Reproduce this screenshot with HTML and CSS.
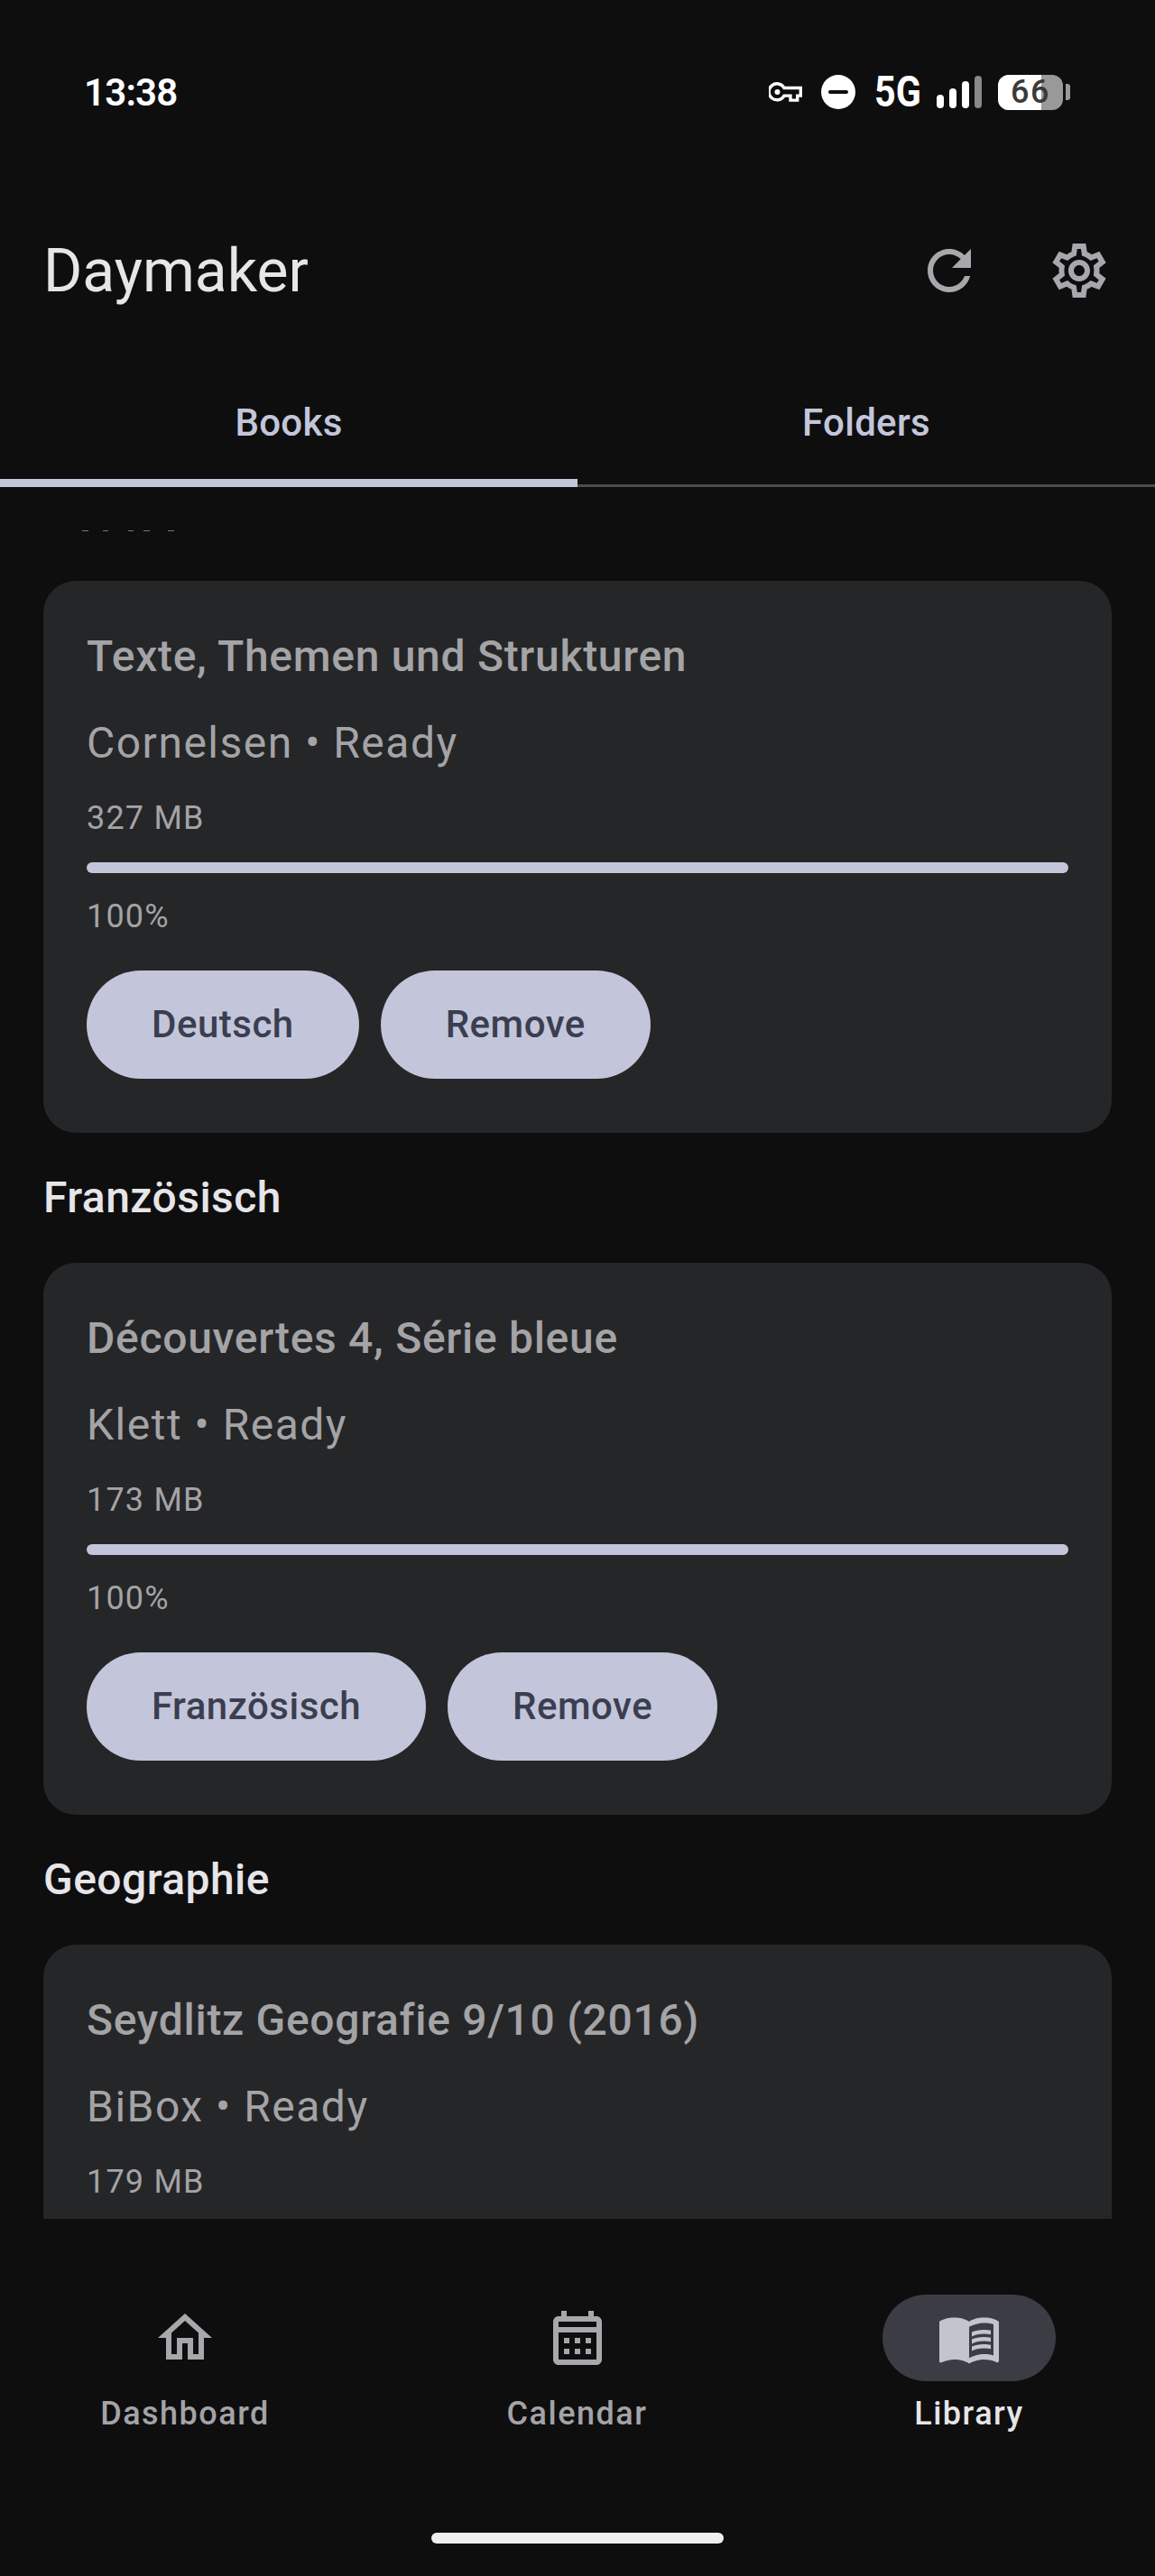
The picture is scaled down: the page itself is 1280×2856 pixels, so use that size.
FILE: index.html
```html
<!DOCTYPE html>
<html lang="en">
<head>
    <meta charset="UTF-8">
    <meta name="viewport" content="width=device-width, initial-scale=1.0">
    <title>Daymaker</title>
    <link rel="stylesheet" href="styles.css">
</head>
<body>
    <div class="status-bar">
        <div class="clock">13:38</div>
        <div class="status-icons">
            <svg class="key-icon" viewBox="0 0 37 22"><path fill="none" stroke="#fff" stroke-width="3.4" d="M17 6.5h18.3v8.6h-3.6v5H24v-5h-7a9 9 0 1 1 0-8.6z"/><circle cx="9.5" cy="11" r="3" fill="#fff"/></svg>
            <svg class="dnd-icon" viewBox="0 0 38 38"><path fill="#fff" fill-rule="evenodd" d="M19 0a19 19 0 1 1 0 38a19 19 0 1 1 0-38zM10 17a2 2 0 0 0 0 4h18a2 2 0 0 0 0-4z"/></svg>
            <span class="net">5G</span>
            <div class="signal">
                <span class="bar b1"></span>
                <span class="bar b2"></span>
                <span class="bar b3"></span>
                <span class="bar b4"></span>
            </div>
            <div class="battery">
                <div class="battery-body"><span class="battery-level"></span><span class="battery-text">66</span></div>
                <span class="battery-nub"></span>
            </div>
        </div>
    </div>

    <div class="app-bar">
        <div class="app-title">Daymaker</div>
        <div class="app-actions">
            <svg class="icon" viewBox="0 0 24 24"><path d="M17.65 6.35C16.2 4.9 14.21 4 12 4c-4.42 0-7.99 3.58-7.99 8s3.57 8 7.99 8c3.73 0 6.84-2.55 7.73-6h-2.08c-.82 2.33-3.04 4-5.65 4-3.31 0-6-2.69-6-6s2.69-6 6-6c1.66 0 3.14.69 4.22 1.78L13 11h7V4l-2.35 2.35z"/></svg>
            <svg class="icon" viewBox="0 0 24 24"><path d="M19.44 12.99l-.01.02c.04-.33.08-.67.08-1.01 0-.34-.03-.66-.07-.99l.01.02 2.44-1.92-2.43-4.22-2.87 1.16.01.01c-.52-.4-1.09-.74-1.71-.99h.01L14.44 2H9.57l-.44 3.07h.01c-.62.25-1.19.59-1.71.99l.01-.01-2.88-1.17-2.44 4.22 2.44 1.92.01-.02c-.04.33-.07.65-.07.99 0 .34.03.68.08 1.01l-.01-.02-2.1 1.65-.33.26 2.43 4.2 2.88-1.15-.02-.04c.53.41 1.1.75 1.73 1.01h-.03L9.58 22h4.85s.03-.18.06-.42l.38-2.65h-.01c.62-.25 1.2-.59 1.73-1.01l-.02.04 2.88 1.15 2.43-4.2s-.14-.12-.33-.26l-2.11-1.66zM17.42 11.26c.04.31.05.52.05.74 0 .22-.02.43-.05.74l-.14 1.13.89.7 1.08.84-.7 1.21-1.27-.51-1.04-.42-.9.68c-.43.32-.84.56-1.25.73l-1.06.43-.16 1.13-.2 1.35h-1.4l-.19-1.35-.16-1.13-1.06-.43c-.43-.18-.83-.41-1.23-.71l-.91-.7-1.06.43-1.27.51-.7-1.21 1.08-.84.89-.7-.14-1.13c-.03-.31-.05-.54-.05-.74s.02-.43.05-.73l.14-1.13-.89-.7-1.08-.84.7-1.21 1.27.51 1.04.42.9-.68c.43-.32.84-.56 1.25-.73l1.06-.43.16-1.13.2-1.35h1.39l.19 1.35.16 1.13 1.06.43c.43.18.83.41 1.23.71l.91.7 1.06-.43 1.27-.51.7 1.21-1.07.85-.89.7.14 1.13zM12 8c-2.21 0-4 1.79-4 4s1.79 4 4 4 4-1.79 4-4-1.79-4-4-4zm0 6c-1.1 0-2-.9-2-2s.9-2 2-2 2 .9 2 2-.9 2-2 2z"/></svg>
        </div>
    </div>

    <div class="tabs">
        <div class="tab tab-active">Books</div>
        <div class="tab">Folders</div>
    </div>

    <div class="content">
        <div class="clip-marks"></div>
        <div class="section-title first">Deutsch</div>
        <div class="card">
            <div class="book-title">Texte, Themen und Strukturen</div>
            <div class="book-sub">Cornelsen • Ready</div>
            <div class="book-size">327 MB</div>
            <div class="progress"></div>
            <div class="book-size percent">100%</div>
            <div class="buttons">
                <div class="btn">Deutsch</div>
                <div class="btn">Remove</div>
            </div>
        </div>
        <div class="section-title">Französisch</div>
        <div class="card">
            <div class="book-title">Découvertes 4, Série bleue</div>
            <div class="book-sub">Klett • Ready</div>
            <div class="book-size">173 MB</div>
            <div class="progress"></div>
            <div class="book-size percent">100%</div>
            <div class="buttons">
                <div class="btn">Französisch</div>
                <div class="btn">Remove</div>
            </div>
        </div>
        <div class="section-title">Geographie</div>
        <div class="card">
            <div class="book-title">Seydlitz Geografie 9/10 (2016)</div>
            <div class="book-sub">BiBox • Ready</div>
            <div class="book-size">179 MB</div>
            <div class="progress"></div>
        </div>
    </div>

    <div class="bottom-nav">
        <div class="nav-items">
            <div class="nav-item">
                <div class="nav-pill">
                    <svg class="icon" viewBox="0 0 24 24"><path d="M12 5.69l5 4.5V18h-2v-6H9v6H7v-7.81l5-4.5M12 3L2 12h3v8h6v-6h2v6h6v-8h3L12 3z"/></svg>
                </div>
                <div class="nav-label">Dashboard</div>
            </div>
            <div class="nav-item">
                <div class="nav-pill">
                    <svg class="icon" viewBox="0 0 24 24"><path d="M19 4h-1V2h-2v2H8V2H6v2H5c-1.1 0-2 .9-2 2v14c0 1.1.9 2 2 2h14c1.1 0 2-.9 2-2V6c0-1.1-.9-2-2-2zm0 16H5V10h14v10zm0-12H5V6h14v2zM9 14H7v-2h2v2zm4 0h-2v-2h2v2zm4 0h-2v-2h2v2zm-8 4H7v-2h2v2zm4 0h-2v-2h2v2zm4 0h-2v-2h2v2z"/></svg>
                </div>
                <div class="nav-label">Calendar</div>
            </div>
            <div class="nav-item nav-active">
                <div class="nav-pill">
                    <svg class="icon" viewBox="0 0 24 24"><path d="M21 5c-1.11-.35-2.33-.5-3.5-.5-1.95 0-4.05.4-5.5 1.5-1.45-1.1-3.55-1.5-5.5-1.5S2.45 4.9 1 6v14.65c0 .25.25.5.5.5.1 0 .15-.05.25-.05C3.1 20.45 5.05 20 6.5 20c1.95 0 4.05.4 5.5 1.5 1.35-.85 3.8-1.5 5.5-1.5 1.65 0 3.35.3 4.75 1.05.1.05.15.05.25.05.25 0 .5-.25.5-.5V6c-.6-.45-1.25-.75-2-1zm0 13.5c-1.1-.35-2.3-.5-3.5-.5-1.7 0-4.15.65-5.5 1.5V8c1.35-.85 3.8-1.5 5.5-1.5 1.2 0 2.4.15 3.5.5v11.5z"/><path d="M17.5 10.5c.88 0 1.73.09 2.5.26V9.24c-.79-.15-1.64-.24-2.5-.24-1.7 0-3.24.29-4.5.83v1.66c1.13-.64 2.7-.99 4.5-.99zM13 12.49v1.66c1.13-.64 2.7-.99 4.5-.99.88 0 1.73.09 2.5.26V11.9c-.79-.15-1.64-.24-2.5-.24-1.7 0-3.24.3-4.5.83zM17.5 14.33c-1.7 0-3.24.29-4.5.83v1.66c1.13-.64 2.7-.99 4.5-.99.88 0 1.73.09 2.5.26v-1.52c-.79-.16-1.64-.24-2.5-.24z"/></svg>
                </div>
                <div class="nav-label">Library</div>
            </div>
        </div>
        <div class="home-indicator"></div>
    </div>
</body>
</html>
```

FILE: styles.css
```css
body {
    margin: 0;
    width: 1280px;
    height: 2856px;
    overflow: hidden;
    background-color: #0e0e0f;
    font-family: Roboto, sans-serif;
    color: #e6e5e8;
}
.status-bar {
    height: 204px;
    box-sizing: border-box;
    padding: 0 94px 0 93px;
    display: flex;
    align-items: center;
    justify-content: space-between;
}
.clock {
    font-size: 42px;
    font-weight: 600;
    letter-spacing: -0.8px;
    color: #fff;
}
.status-icons {
    display: flex;
    align-items: center;
}
.key-icon {
    width: 37px;
    height: 22px;
    margin-right: 21px;
}
.dnd-icon {
    width: 38px;
    height: 38px;
    margin-right: 21px;
}
.net {
    width: 50px;
    font-size: 48px;
    font-weight: 700;
    line-height: 38px;
    color: #fff;
    transform: scaleX(0.86);
    transform-origin: left center;
    margin-right: 19px;
}
.signal {
    display: flex;
    align-items: flex-end;
    gap: 6px;
    height: 36px;
    margin-right: 18px;
}
.bar {
    width: 8px;
    background-color: #fff;
    border-radius: 4px;
}
.b1 { height: 15px; }
.b2 { height: 22px; }
.b3 { height: 30px; }
.b4 { height: 36px; background-color: #888; }
.battery {
    display: flex;
    align-items: center;
}
.battery-body {
    width: 72px;
    height: 39px;
    border-radius: 12px;
    background-color: #999;
    position: relative;
}
.battery-level {
    position: absolute;
    left: 0;
    top: 0;
    bottom: 0;
    width: 48px;
    border-radius: 12px 0 0 12px;
    background-color: #fff;
}
.battery-text {
    position: absolute;
    left: 0;
    right: 0;
    top: 0;
    text-align: center;
    font-size: 36px;
    font-weight: 500;
    line-height: 39px;
    letter-spacing: 1.5px;
    color: #3a3a3a;
}
.battery-nub {
    width: 5px;
    height: 18px;
    margin-left: 3px;
    background-color: #999;
    border-radius: 0 3px 3px 0;
}
.app-bar {
    height: 192px;
    box-sizing: border-box;
    padding: 0 48px;
    display: flex;
    align-items: center;
    justify-content: space-between;
}
.app-title {
    font-size: 66px;
    color: #e6e5e8;
}
.app-actions {
    display: flex;
    gap: 72px;
}
.icon {
    width: 72px;
    height: 72px;
    fill: #a8a8ac;
    display: block;
}
.tabs {
    height: 144px;
    display: flex;
    position: relative;
    border-bottom: 3px solid #4b4b4c;
    box-sizing: border-box;
}
.tab {
    flex: 1;
    display: flex;
    align-items: center;
    justify-content: center;
    padding-top: 3px;
    font-size: 42px;
    font-weight: 500;
    letter-spacing: 0.3px;
    color: #c3c6da;
}
.tab-active::after {
    content: "";
    position: absolute;
    left: 0;
    bottom: -3px;
    width: 640px;
    height: 9px;
    background-color: #c3c6da;
}
.content {
    margin-top: 48px;
    height: 1872px;
    overflow: hidden;
    padding: 0 48px;
    position: relative;
}
/* what is left of the scrolled-off heading at the clip edge */
.clip-marks {
    position: absolute;
    left: 91px;
    top: 0;
    width: 102px;
    height: 1px;
    background: linear-gradient(to right,
        #77777a 0 7px, transparent 7px 23px,
        #77777a 23px 29px, transparent 29px 51px,
        #77777a 51px 57px, transparent 57px 68px,
        #77777a 68px 75px, transparent 75px 95px,
        #77777a 95px 102px);
}
.section-title {
    margin: 40px 0;
    font-size: 48px;
    font-weight: 500;
    line-height: 64px;
    letter-spacing: 0.45px;
    color: #e6e5e8;
}
.section-title.first {
    margin-top: -48px;
}
.card {
    height: 612px;
    box-sizing: border-box;
    padding: 52px 48px 0;
    background-color: #252628;
    border-radius: 36px;
    color: #a4a3a6;
}
.book-title {
    font-size: 48px;
    font-weight: 500;
    line-height: 64px;
    letter-spacing: 0.7px;
}
.book-sub {
    margin-top: 32px;
    font-size: 48px;
    line-height: 64px;
    letter-spacing: 1.5px;
}
.book-size {
    margin-top: 27px;
    font-size: 36px;
    line-height: 48px;
    letter-spacing: 1.2px;
}
.percent {
    margin-top: 24px;
}
.progress {
    margin-top: 25px;
    height: 12px;
    border-radius: 6px;
    background-color: #c3c6da;
}
.buttons {
    margin-top: 36px;
    display: flex;
    gap: 24px;
}
.btn {
    height: 120px;
    box-sizing: border-box;
    padding: 0 72px 2px;
    display: flex;
    align-items: center;
    border-radius: 60px;
    background-color: #c3c6da;
    color: #3b3e50;
    font-size: 42px;
    font-weight: 500;
    letter-spacing: 0.5px;
}
.bottom-nav {
    height: 396px;
    box-sizing: border-box;
    padding-top: 84px;
}
.nav-items {
    display: flex;
    justify-content: space-between;
    padding: 0 110px 0 109px;
}
.nav-item {
    width: 192px;
    display: flex;
    flex-direction: column;
    align-items: center;
}
.nav-pill {
    width: 192px;
    height: 96px;
    border-radius: 48px;
    display: flex;
    align-items: center;
    justify-content: center;
}
.nav-label {
    margin-top: 12px;
    font-size: 36px;
    font-weight: 500;
    line-height: 48px;
    letter-spacing: 1.5px;
    white-space: nowrap;
    color: #a4a3a6;
}
.nav-active .nav-pill {
    background-color: #3c3d44;
}
.nav-active .icon {
    fill: #c4c4cc;
}
.nav-active .nav-label {
    color: #e6e5e8;
}
.home-indicator {
    width: 324px;
    height: 12px;
    margin: 108px auto 0;
    border-radius: 6px;
    background-color: #eee;
}
```
